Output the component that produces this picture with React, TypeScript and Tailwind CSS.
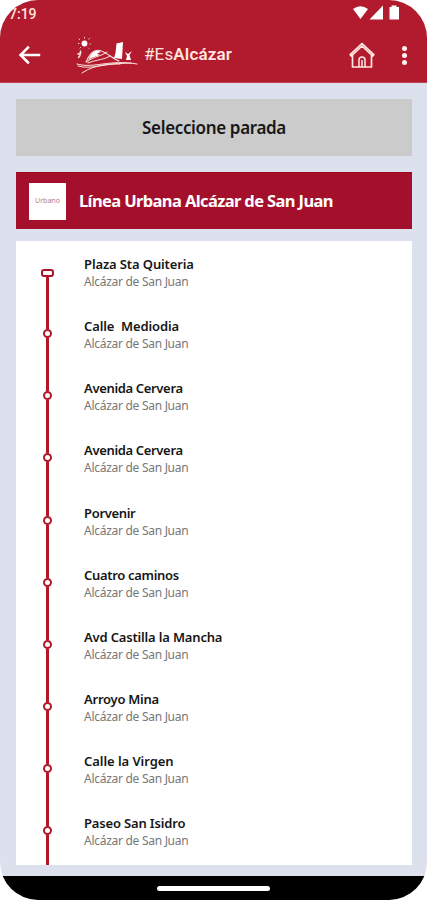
const stops = [
  { name: 'Plaza Sta Quiteria', tracking: 'tracking-[-0.12px]' },
  { name: 'Calle  Mediodia', tracking: 'tracking-[-0.1px]' },
  { name: 'Avenida Cervera', tracking: 'tracking-[-0.34px]' },
  { name: 'Avenida Cervera', tracking: 'tracking-[-0.34px]' },
  { name: 'Porvenir', tracking: 'tracking-[-0.32px]' },
  { name: 'Cuatro caminos', tracking: 'tracking-[-0.32px]' },
  { name: 'Avd Castilla la Mancha', tracking: 'tracking-[-0.17px]' },
  { name: 'Arroyo Mina', tracking: 'tracking-[-0.25px]' },
  { name: 'Calle la Virgen', tracking: 'tracking-[-0.05px]' },
  { name: 'Paseo San Isidro', tracking: 'tracking-[-0.16px]' },
];

function StatusIcons() {
  return (
    <svg width="50" height="18" viewBox="0 0 50 18" fill="#fff" aria-hidden="true">
      <path d="M2 4Q9.500 -1.500 17 4L9.500 14Z" />
      <path d="M32 .5V14.500H18.500Z" />
      <path d="M40.500 .5H45.500V2H48V14.500H38.500V2H40.500Z" />
    </svg>
  );
}

function Logo() {
  return (
    <svg width="64" height="40" viewBox="0 0 64 40" fill="none" stroke="#fbe3df" strokeLinecap="round" aria-hidden="true">
      <circle cx="8.500" cy="8.500" r="2.900" fill="#fff" stroke="none" />
      <path d="M8.500 2.500v.5M3 4l.6.6M13.500 3.500l-.6.6M2.500 8.500h.5M14 9h.5M4 13l.5-.5M12.500 13l.3.3" strokeWidth="1" />
      <path d="M4.500 16l-.5 4.500M4 20.500l-1.500 2M2 19l3-1" strokeWidth="1.400" />
      <path d="M10 27C13 20 18 14 24 15.500C32 18 37 24 43 26" strokeWidth="1.100" />
      <path d="M14 21C17 16 21 14.500 25 17L21 18.500L24 20L15 23L12 26Z" fill="#fff" stroke="none" />
      <path d="M11 27C18 21 24 22 31 17M12 28C22 24 28 25 34 21" strokeWidth="1" />
      <path d="M40.500 8.500L47 7L46 24L38 23L39.500 18Z" fill="#fff" stroke="none" />
      <path d="M49 17L52 19L56 16L53.500 20L55 25H50L51 21Z" fill="#fff" stroke="none" />
      <path d="M1 29C18 34 33 24 61 29M6 38C20 28 38 29 55 28M2 31C15 35 30 28 44 29" strokeWidth="1" />
    </svg>
  );
}

function HomeIcon() {
  return (
    <svg width="28" height="28" viewBox="0 0 28 28" fill="none" stroke="#ffe9e2" strokeWidth="1.700" strokeLinejoin="round" strokeLinecap="round" aria-hidden="true">
      <path d="M4.500 14L3.300 15L2.200 13.700L14 2.500L25.800 13.700L24.700 15L23.500 14V26H4.500V14L14 5L23.500 14" />
      <path d="M11 25.500V19Q11 16 14 16T17 19V25.500M14 19.500V25.500" strokeWidth="1.500" />
    </svg>
  );
}

export default function App() {
  return (
    <main className="h-[900px] w-[427px] overflow-hidden bg-white font-['Noto_Sans',sans-serif]">
      <div className="flex h-full flex-col overflow-hidden rounded-[38px] bg-[#dde1ed]">
        <header className="h-[83px] shrink-0 border-b border-[#bd4050] bg-[#b21b2d] text-white">
          <div className="flex h-7 items-start justify-between pl-[9px] pr-[26px]">
            <span className="pt-[4px] font-['Roboto',sans-serif] text-[14px] leading-5 font-medium text-[#ffe5df]">7:19</span>
            <div className="pt-[5px]"><StatusIcons /></div>
          </div>
          <div className="flex h-[54px] items-center pl-[18px]">
            <svg width="24" height="22" viewBox="0 0 24 22" fill="none" stroke="#fff" strokeWidth="2.500" strokeLinecap="square" aria-hidden="true">
              <path d="M10 3.500L2.500 11L10 18.500M3 11H21" />
            </svg>
            <div className="ml-[34px]"><Logo /></div>
            <span className="ml-[4px] font-['Roboto',sans-serif] text-[17px] tracking-[0.15px] text-[#ffe5df]">
              #Es<b className="font-semibold">Alcázar</b>
            </span>
            <div className="mr-[26px] ml-auto"><HomeIcon /></div>
            <div className="mr-[20px] flex flex-col gap-[2px]">
              <i className="size-[5px] rounded-full bg-[#fff1ed]" />
              <i className="size-[5px] rounded-full bg-[#fff1ed]" />
              <i className="size-[5px] rounded-full bg-[#fff1ed]" />
            </div>
          </div>
        </header>

        <div className="flex flex-1 flex-col px-4 pt-4 pr-[15px]">
          <button className="h-[57px] w-full shrink-0 bg-[#cbcbcb] text-[17px] font-semibold tracking-[-0.35px] text-[#171717]">
            Seleccione parada
          </button>
          <section className="mt-4 flex h-[57px] shrink-0 items-center border-t border-[#960818] bg-[#a40f2c] pl-[13px] text-white">
            <div className="flex size-[37px] items-center justify-center bg-white text-[7px] text-[#b47b87]">Urbano</div>
            <h1 className="ml-[13px] text-[16.5px] font-bold tracking-[-0.62px] whitespace-nowrap">Línea Urbana Alcázar de San Juan</h1>
          </section>
          <ul className="mt-3 h-[624px] overflow-hidden bg-white">
            {stops.map((stop, index) => (
              <li key={index} className="flex h-[62.15px]">
                <div className="flex w-[62px] shrink-0 flex-col items-center">
                  <i className={index === 0 ? 'h-[28px]' : 'h-[26px] w-[3px] bg-[#b21728]'} />
                  <i className={index === 0 ? 'h-[8px] w-[13px] shrink-0 rounded-[3px] border-2 border-[#a9142a] bg-white' : 'size-[9px] shrink-0 rounded-full border-2 border-[#b21728] bg-white'} />
                  <i className="w-[3px] flex-1 bg-[#b21728]" />
                </div>
                <div className="pt-[14px] pl-[6px] whitespace-pre">
                  <h2 className={`text-[13px] leading-[18px] font-semibold text-[#161616] ${stop.tracking}`}>{stop.name}</h2>
                  <p className="text-[12px] leading-[17px] tracking-[-0.28px] text-[#777]">Alcázar de San Juan</p>
                </div>
              </li>
            ))}
            <li className="flex w-[62px] justify-center"><i className="h-3 w-[3px] bg-[#b21728]" /></li>
          </ul>
        </div>
        <footer className="flex h-6 shrink-0 items-center justify-center bg-black">
          <div className="h-[5px] w-[113px] rounded-full bg-white" />
        </footer>
      </div>
    </main>
  );
}
